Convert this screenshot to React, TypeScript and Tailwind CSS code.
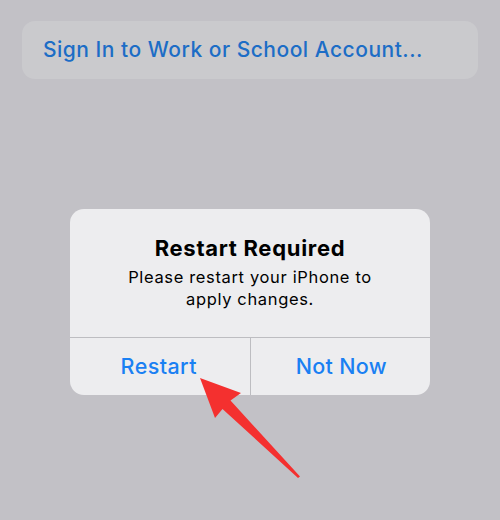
import React from "react";

export default function App() {
  return (
    <div
      className="relative w-[500px] h-[520px] bg-[#c2c1c6] overflow-hidden"
      style={{ fontFamily: "Inter, 'Noto Sans', sans-serif" }}
    >
      <div className="pt-[21px] px-[22px]">
        <div className="h-[58px] rounded-[13px] bg-[#cacacd] flex items-center pl-[21px]">
          <span className="text-[21px] font-medium text-[#1c6dc6] tracking-[0.5px]">
            Sign In to Work or School Account...
          </span>
        </div>
      </div>

      <div className="mt-[130px] mx-[70px] w-[360px] rounded-[14px] bg-[#ededef] overflow-hidden">
        <div className="pt-[25px] h-[128px] flex flex-col items-center text-center">
          <div className="text-[22px] font-bold text-black leading-[28px] tracking-[0.7px]">Restart Required</div>
          <div className="text-[16.5px] text-black leading-[22px] mt-[4px] tracking-[0.65px]">
            Please restart your iPhone to
            <br />
            apply changes.
          </div>
        </div>
        <div className="h-px bg-[#bdbdc1]" />
        <div className="flex h-[57px]">
          <div className="flex-1 flex items-center justify-center text-[21.5px] font-medium text-[#1a80f3] tracking-[0.4px] pr-[2px]">
            Restart
          </div>
          <div className="w-px bg-[#bdbdc1]" />
          <div className="flex-1 flex items-center justify-center text-[21.5px] font-medium text-[#1a80f3] tracking-[0.3px] pl-[2px]">
            Not Now
          </div>
        </div>
      </div>

      <svg className="absolute left-0 top-0" width="500" height="520" viewBox="0 0 500 520">
        <path
          d="M200 378 L241 393 L230.5 400.5 L300 476.5 L298 478 L222.5 409 L215 418 Z"
          fill="#f4302f"
          strokeLinejoin="round"
        />
      </svg>
    </div>
  );
}
